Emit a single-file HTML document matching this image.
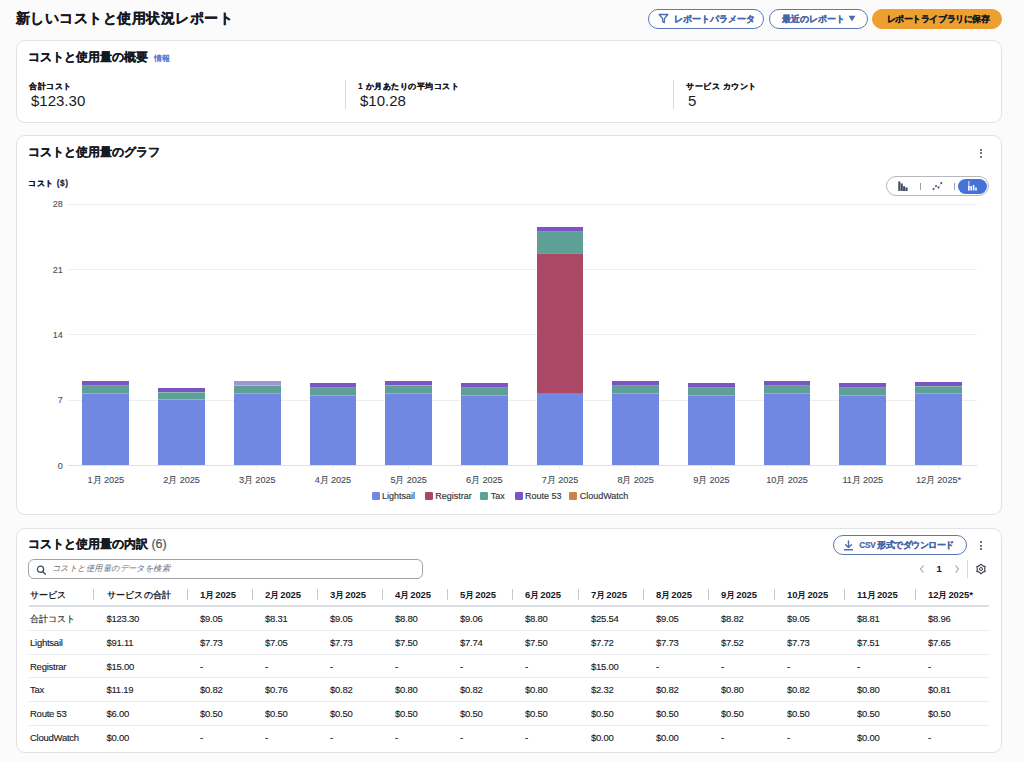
<!DOCTYPE html>
<html><head><meta charset="utf-8">
<style>
*{box-sizing:border-box;margin:0;padding:0}
html,body{width:1024px;height:762px;overflow:hidden;background:#fbfbfb;font-family:"Liberation Sans",sans-serif;color:#16191f}
.a{position:absolute;white-space:nowrap}
.card{position:absolute;left:16px;width:986px;background:#fff;border:1px solid #e1e2e4;border-radius:9px}
.btn{position:absolute;height:19.5px;border:1.8px solid #5b77b5;border-radius:10px;background:#fff}
.bt{position:absolute;font-size:8.6px;font-weight:bold;color:#4566a8;line-height:10px;white-space:nowrap;-webkit-text-stroke:0.2px currentColor}
.h2{font-size:12.2px;font-weight:bold;color:#16191f;line-height:14px;-webkit-text-stroke:0.2px #16191f}
.lbl{font-size:8.4px;letter-spacing:0.5px;font-weight:bold;color:#16191f;line-height:11px;-webkit-text-stroke:0.15px #16191f}
.val{font-size:15px;color:#16191f;line-height:17px}
.ylab{font-size:9px;color:#4a5059;text-align:right;width:20px;line-height:12px;-webkit-text-stroke:0.12px #4a5059}
.xl{font-size:9.2px;color:#454b54;text-align:center;width:70px;line-height:12px;letter-spacing:-0.1px;-webkit-text-stroke:0.1px #454b54}
.xl .j{font-size:8.8px}
.leg{font-size:9px;color:#2f3640;line-height:12px;-webkit-text-stroke:0.15px #2f3640}
.sw{position:absolute;width:8.2px;height:7.8px;border-radius:1.2px}
.th{font-size:9.5px;font-weight:bold;color:#16191f;line-height:12px;letter-spacing:-0.1px;word-spacing:-1.5px}
.th .j{font-size:8.5px;letter-spacing:0}
.td{font-size:9.5px;color:#16191f;line-height:12px;letter-spacing:-0.25px;-webkit-text-stroke:0.12px #16191f}
.td .j{font-size:8.5px;letter-spacing:0}
.sep{position:absolute;width:1px;height:11px;background:#c6c8ce;top:589px}
.rl{position:absolute;left:29px;width:960px;height:1px;background:#e9ebed}
.kb{position:absolute;width:2.4px;height:2.4px;border-radius:50%;background:#414d5c}
</style></head><body>
<div class="a" style="left:16px;top:8.8px;font-size:14px;letter-spacing:0.47px;font-weight:bold;line-height:18px;-webkit-text-stroke:0.25px #16191f">新しいコストと使用状況レポート</div>
<div class="btn" style="left:648px;top:9px;width:116px"></div>
<svg class="a" style="left:658px;top:13px" width="11" height="11" viewBox="0 0 11 11"><path d="M1.2 1.5 H9.8 L6.4 5.6 V9.6 L4.6 8.6 V5.6 Z" fill="none" stroke="#4b6db0" stroke-width="1.3" stroke-linejoin="round"/></svg>
<div class="bt" style="left:674px;top:14px">レポートパラメータ</div>
<div class="btn" style="left:769px;top:9px;width:99px"></div>
<div class="bt" style="left:782px;top:14px">最近のレポート</div>
<svg class="a" style="left:848px;top:15px" width="8" height="7" viewBox="0 0 8 7"><path d="M0.5 0.8 H7.5 L4 6.2 Z" fill="#4b6db0"/></svg>
<div class="btn" style="left:872px;top:9px;width:130px;background:#eda02f;border-color:#eda02f"></div>
<div class="bt" style="left:886.5px;top:14px;color:#16191f;letter-spacing:-0.42px">レポートライブラリに保存</div>
<div class="card" style="top:40px;height:83px"></div>
<div class="a h2" style="left:28px;top:50px">コストと使用量の概要</div>
<div class="a" style="left:153.5px;top:53.5px;font-size:8px;color:#4a6fd0;line-height:10px;-webkit-text-stroke:0.3px #4a6fd0">情報</div>
<div class="a lbl" style="left:29px;top:80.8px">合計コスト</div>
<div class="a val" style="left:31px;top:92px">$123.30</div>
<div class="a lbl" style="left:358px;top:80.8px">1 か月あたりの平均コスト</div>
<div class="a val" style="left:360px;top:92px">$10.28</div>
<div class="a lbl" style="left:686px;top:80.8px">サービス カウント</div>
<div class="a val" style="left:688px;top:92px">5</div>
<div style="position:absolute;left:345px;top:80px;width:1px;height:29px;background:#d9dbde"></div>
<div style="position:absolute;left:673px;top:80px;width:1px;height:29px;background:#d9dbde"></div>
<div class="card" style="top:135px;height:380px"></div>
<div class="a h2" style="left:28px;top:145px">コストと使用量のグラフ</div>
<div class="a lbl" style="left:28.4px;top:177.8px">コスト ($)</div>
<div class="kb" style="left:979.8px;top:148.5px"></div>
<div class="kb" style="left:979.8px;top:152px"></div>
<div class="kb" style="left:979.8px;top:155.5px"></div>
<div style="position:absolute;left:886px;top:176px;width:103px;height:19.5px;border:1px solid #b4b7bc;border-radius:10px"></div>
<div style="position:absolute;left:958px;top:179px;width:29px;height:14.5px;background:#4572d8;border-radius:8px"></div>
<div style="position:absolute;left:920px;top:183px;width:1px;height:7px;background:#9aa0a8"></div>
<div style="position:absolute;left:954px;top:183px;width:1px;height:7px;background:#9aa0a8"></div>
<svg class="a" style="left:897.5px;top:180.5px" width="11" height="11" viewBox="0 0 11 11"><g fill="#414d5c"><rect x="0.3" y="0.5" width="2.1" height="9.5"/><rect x="2.7" y="2.5" width="2.1" height="7.5"/><rect x="5.1" y="5.2" width="2.1" height="4.8"/><rect x="7.5" y="6.5" width="2.1" height="3.5"/></g></svg>
<svg class="a" style="left:932px;top:181px" width="11" height="10" viewBox="0 0 11 10"><g fill="#414d5c"><circle cx="1.5" cy="8" r="1"/><circle cx="4" cy="5" r="1"/><circle cx="6.5" cy="6.5" r="1"/><circle cx="9.3" cy="2" r="1"/></g><path d="M1.5 8 L4 5 L6.5 6.5 L9.3 2" stroke="#414d5c" stroke-width="0.4" opacity="0.5" fill="none"/></svg>
<svg class="a" style="left:967px;top:180px" width="12" height="12" viewBox="0 0 12 12"><g fill="#fff"><rect x="1" y="1" width="1.6" height="9.5" opacity="0.55"/><rect x="1" y="6" width="1.6" height="4.5"/><rect x="3.4" y="6" width="1.6" height="4.5"/><rect x="5.8" y="5" width="1.6" height="5.5"/><rect x="8.2" y="7.5" width="1.6" height="3"/></g></svg>
<div style="position:absolute;left:68.0px;top:203.70px;width:908.5px;height:1px;background:#eceef0"></div>
<div class="a ylab" style="left:42.7px;top:198.40px">28</div>
<div style="position:absolute;left:68.0px;top:268.98px;width:908.5px;height:1px;background:#eceef0"></div>
<div class="a ylab" style="left:42.7px;top:263.68px">21</div>
<div style="position:absolute;left:68.0px;top:334.25px;width:908.5px;height:1px;background:#eceef0"></div>
<div class="a ylab" style="left:42.7px;top:328.95px">14</div>
<div style="position:absolute;left:68.0px;top:399.52px;width:908.5px;height:1px;background:#eceef0"></div>
<div class="a ylab" style="left:42.7px;top:394.22px">7</div>
<div style="position:absolute;left:68.0px;top:464.80px;width:908.5px;height:1px;background:#dcdfe3"></div>
<div class="a ylab" style="left:42.7px;top:459.50px">0</div>
<div style="position:absolute;left:82.44px;top:393.22px;width:46.8px;height:72.08px;background:#7088e1"></div>
<div style="position:absolute;left:82.44px;top:385.57px;width:46.8px;height:7.65px;background:#5ea095"></div>
<div style="position:absolute;left:82.44px;top:392.62px;width:46.8px;height:1px;background:rgba(255,255,255,0.28)"></div>
<div style="position:absolute;left:82.44px;top:380.91px;width:46.8px;height:4.66px;background:#7b55c5"></div>
<div style="position:absolute;left:82.44px;top:384.97px;width:46.8px;height:1px;background:rgba(255,255,255,0.28)"></div>
<div style="position:absolute;left:105.34px;top:466.30px;width:1px;height:3px;background:#e6e8eb"></div>
<div class="a xl" style="left:70.84px;top:473.5px">1<span class="j">月</span> 2025</div>
<div style="position:absolute;left:158.13px;top:399.56px;width:46.8px;height:65.74px;background:#7088e1"></div>
<div style="position:absolute;left:158.13px;top:392.47px;width:46.8px;height:7.09px;background:#5ea095"></div>
<div style="position:absolute;left:158.13px;top:398.96px;width:46.8px;height:1px;background:rgba(255,255,255,0.28)"></div>
<div style="position:absolute;left:158.13px;top:387.81px;width:46.8px;height:4.66px;background:#7b55c5"></div>
<div style="position:absolute;left:158.13px;top:391.87px;width:46.8px;height:1px;background:rgba(255,255,255,0.28)"></div>
<div style="position:absolute;left:181.03px;top:466.30px;width:1px;height:3px;background:#e6e8eb"></div>
<div class="a xl" style="left:146.53px;top:473.5px">2<span class="j">月</span> 2025</div>
<div style="position:absolute;left:233.82px;top:393.22px;width:46.8px;height:72.08px;background:#7088e1"></div>
<div style="position:absolute;left:233.82px;top:385.57px;width:46.8px;height:7.65px;background:#5ea095"></div>
<div style="position:absolute;left:233.82px;top:392.62px;width:46.8px;height:1px;background:rgba(255,255,255,0.28)"></div>
<div style="position:absolute;left:233.82px;top:380.91px;width:46.8px;height:4.66px;background:#a592d6"></div>
<div style="position:absolute;left:233.82px;top:384.97px;width:46.8px;height:1px;background:rgba(255,255,255,0.28)"></div>
<div style="position:absolute;left:256.73px;top:466.30px;width:1px;height:3px;background:#e6e8eb"></div>
<div class="a xl" style="left:222.23px;top:473.5px">3<span class="j">月</span> 2025</div>
<div style="position:absolute;left:309.51px;top:395.36px;width:46.8px;height:69.94px;background:#7088e1"></div>
<div style="position:absolute;left:309.51px;top:387.90px;width:46.8px;height:7.46px;background:#5ea095"></div>
<div style="position:absolute;left:309.51px;top:394.76px;width:46.8px;height:1px;background:rgba(255,255,255,0.28)"></div>
<div style="position:absolute;left:309.51px;top:383.24px;width:46.8px;height:4.66px;background:#7b55c5"></div>
<div style="position:absolute;left:309.51px;top:387.30px;width:46.8px;height:1px;background:rgba(255,255,255,0.28)"></div>
<div style="position:absolute;left:332.41px;top:466.30px;width:1px;height:3px;background:#e6e8eb"></div>
<div class="a xl" style="left:297.91px;top:473.5px">4<span class="j">月</span> 2025</div>
<div style="position:absolute;left:385.20px;top:393.12px;width:46.8px;height:72.18px;background:#7088e1"></div>
<div style="position:absolute;left:385.20px;top:385.48px;width:46.8px;height:7.65px;background:#5ea095"></div>
<div style="position:absolute;left:385.20px;top:392.52px;width:46.8px;height:1px;background:rgba(255,255,255,0.28)"></div>
<div style="position:absolute;left:385.20px;top:380.82px;width:46.8px;height:4.66px;background:#7b55c5"></div>
<div style="position:absolute;left:385.20px;top:384.88px;width:46.8px;height:1px;background:rgba(255,255,255,0.28)"></div>
<div style="position:absolute;left:408.11px;top:466.30px;width:1px;height:3px;background:#e6e8eb"></div>
<div class="a xl" style="left:373.61px;top:473.5px">5<span class="j">月</span> 2025</div>
<div style="position:absolute;left:460.89px;top:395.36px;width:46.8px;height:69.94px;background:#7088e1"></div>
<div style="position:absolute;left:460.89px;top:387.90px;width:46.8px;height:7.46px;background:#5ea095"></div>
<div style="position:absolute;left:460.89px;top:394.76px;width:46.8px;height:1px;background:rgba(255,255,255,0.28)"></div>
<div style="position:absolute;left:460.89px;top:383.24px;width:46.8px;height:4.66px;background:#7b55c5"></div>
<div style="position:absolute;left:460.89px;top:387.30px;width:46.8px;height:1px;background:rgba(255,255,255,0.28)"></div>
<div style="position:absolute;left:483.79px;top:466.30px;width:1px;height:3px;background:#e6e8eb"></div>
<div class="a xl" style="left:449.29px;top:473.5px">6<span class="j">月</span> 2025</div>
<div style="position:absolute;left:536.59px;top:393.31px;width:46.8px;height:71.99px;background:#7088e1"></div>
<div style="position:absolute;left:536.59px;top:253.44px;width:46.8px;height:139.88px;background:#ab4866"></div>
<div style="position:absolute;left:536.59px;top:231.80px;width:46.8px;height:21.63px;background:#5ea095"></div>
<div style="position:absolute;left:536.59px;top:252.84px;width:46.8px;height:1px;background:rgba(255,255,255,0.28)"></div>
<div style="position:absolute;left:536.59px;top:227.14px;width:46.8px;height:4.66px;background:#7b55c5"></div>
<div style="position:absolute;left:536.59px;top:231.20px;width:46.8px;height:1px;background:rgba(255,255,255,0.28)"></div>
<div style="position:absolute;left:559.49px;top:466.30px;width:1px;height:3px;background:#e6e8eb"></div>
<div class="a xl" style="left:524.99px;top:473.5px">7<span class="j">月</span> 2025</div>
<div style="position:absolute;left:612.27px;top:393.22px;width:46.8px;height:72.08px;background:#7088e1"></div>
<div style="position:absolute;left:612.27px;top:385.57px;width:46.8px;height:7.65px;background:#5ea095"></div>
<div style="position:absolute;left:612.27px;top:392.62px;width:46.8px;height:1px;background:rgba(255,255,255,0.28)"></div>
<div style="position:absolute;left:612.27px;top:380.91px;width:46.8px;height:4.66px;background:#7b55c5"></div>
<div style="position:absolute;left:612.27px;top:384.97px;width:46.8px;height:1px;background:rgba(255,255,255,0.28)"></div>
<div style="position:absolute;left:635.17px;top:466.30px;width:1px;height:3px;background:#e6e8eb"></div>
<div class="a xl" style="left:600.67px;top:473.5px">8<span class="j">月</span> 2025</div>
<div style="position:absolute;left:687.97px;top:395.18px;width:46.8px;height:70.12px;background:#7088e1"></div>
<div style="position:absolute;left:687.97px;top:387.72px;width:46.8px;height:7.46px;background:#5ea095"></div>
<div style="position:absolute;left:687.97px;top:394.58px;width:46.8px;height:1px;background:rgba(255,255,255,0.28)"></div>
<div style="position:absolute;left:687.97px;top:383.05px;width:46.8px;height:4.66px;background:#7b55c5"></div>
<div style="position:absolute;left:687.97px;top:387.12px;width:46.8px;height:1px;background:rgba(255,255,255,0.28)"></div>
<div style="position:absolute;left:710.87px;top:466.30px;width:1px;height:3px;background:#e6e8eb"></div>
<div class="a xl" style="left:676.37px;top:473.5px">9<span class="j">月</span> 2025</div>
<div style="position:absolute;left:763.66px;top:393.22px;width:46.8px;height:72.08px;background:#7088e1"></div>
<div style="position:absolute;left:763.66px;top:385.57px;width:46.8px;height:7.65px;background:#5ea095"></div>
<div style="position:absolute;left:763.66px;top:392.62px;width:46.8px;height:1px;background:rgba(255,255,255,0.28)"></div>
<div style="position:absolute;left:763.66px;top:380.91px;width:46.8px;height:4.66px;background:#7b55c5"></div>
<div style="position:absolute;left:763.66px;top:384.97px;width:46.8px;height:1px;background:rgba(255,255,255,0.28)"></div>
<div style="position:absolute;left:786.56px;top:466.30px;width:1px;height:3px;background:#e6e8eb"></div>
<div class="a xl" style="left:752.06px;top:473.5px">10<span class="j">月</span> 2025</div>
<div style="position:absolute;left:839.35px;top:395.27px;width:46.8px;height:70.03px;background:#7088e1"></div>
<div style="position:absolute;left:839.35px;top:387.81px;width:46.8px;height:7.46px;background:#5ea095"></div>
<div style="position:absolute;left:839.35px;top:394.67px;width:46.8px;height:1px;background:rgba(255,255,255,0.28)"></div>
<div style="position:absolute;left:839.35px;top:383.15px;width:46.8px;height:4.66px;background:#7b55c5"></div>
<div style="position:absolute;left:839.35px;top:387.21px;width:46.8px;height:1px;background:rgba(255,255,255,0.28)"></div>
<div style="position:absolute;left:862.25px;top:466.30px;width:1px;height:3px;background:#e6e8eb"></div>
<div class="a xl" style="left:827.75px;top:473.5px">11<span class="j">月</span> 2025</div>
<div style="position:absolute;left:915.03px;top:393.96px;width:46.8px;height:71.34px;background:#7088e1"></div>
<div style="position:absolute;left:915.03px;top:386.41px;width:46.8px;height:7.55px;background:#5ea095"></div>
<div style="position:absolute;left:915.03px;top:393.36px;width:46.8px;height:1px;background:rgba(255,255,255,0.28)"></div>
<div style="position:absolute;left:915.03px;top:381.75px;width:46.8px;height:4.66px;background:#7b55c5"></div>
<div style="position:absolute;left:915.03px;top:385.81px;width:46.8px;height:1px;background:rgba(255,255,255,0.28)"></div>
<div style="position:absolute;left:937.93px;top:466.30px;width:1px;height:3px;background:#e6e8eb"></div>
<div class="a xl" style="left:903.43px;top:473.5px">12<span class="j">月</span> 2025*</div>
<div class="sw" style="left:371.5px;top:492px;background:#7088e1"></div>
<div class="a leg" style="left:382.0px;top:490px">Lightsail</div>
<div class="sw" style="left:424.8px;top:492px;background:#ab4866"></div>
<div class="a leg" style="left:435.3px;top:490px">Registrar</div>
<div class="sw" style="left:480.3px;top:492px;background:#5ea095"></div>
<div class="a leg" style="left:490.8px;top:490px">Tax</div>
<div class="sw" style="left:514.5px;top:492px;background:#7b55c5"></div>
<div class="a leg" style="left:525.0px;top:490px">Route 53</div>
<div class="sw" style="left:569.2px;top:492px;background:#c9834b"></div>
<div class="a leg" style="left:579.7px;top:490px">CloudWatch</div>
<div class="card" style="top:528px;height:225px"></div>
<div class="a h2" style="left:28px;top:537px">コストと使用量の内訳 <span style="font-weight:normal;color:#5f6b7a;font-size:12.5px">(6)</span></div>
<div class="btn" style="left:833px;top:535px;width:134px"></div>
<svg class="a" style="left:843px;top:540px" width="11" height="11" viewBox="0 0 11 11"><path d="M5.5 1 V7.5 M2.6 4.8 L5.5 7.6 L8.4 4.8 M1.5 9.8 H9.5" fill="none" stroke="#4b6db0" stroke-width="1.4" stroke-linecap="round" stroke-linejoin="round"/></svg>
<div class="bt" style="left:859.2px;top:540.5px;font-size:8.2px;letter-spacing:-0.2px">CSV</div>
<div class="bt" style="left:877px;top:540px;letter-spacing:-0.5px">形式でダウンロード</div>
<div class="kb" style="left:979.8px;top:541px"></div>
<div class="kb" style="left:979.8px;top:544.5px"></div>
<div class="kb" style="left:979.8px;top:548px"></div>
<div style="position:absolute;left:28px;top:559px;width:395px;height:19.5px;border:1px solid #a0a3a9;border-radius:6px"></div>
<svg class="a" style="left:35.5px;top:564.5px" width="11" height="11" viewBox="0 0 11 11"><circle cx="4.5" cy="4.3" r="3.1" fill="none" stroke="#414d5c" stroke-width="1.3"/><path d="M6.9 6.8 L9.3 9.2" stroke="#414d5c" stroke-width="1.4" stroke-linecap="round"/></svg>
<div class="a" style="left:52px;top:563px;font-size:8.3px;letter-spacing:0.45px;font-style:italic;color:#687078;line-height:11px">コストと使用量のデータを検索</div>
<svg class="a" style="left:917.5px;top:564px" width="8" height="10" viewBox="0 0 8 10"><path d="M5.5 1.5 L2.5 5 L5.5 8.5" fill="none" stroke="#9aa0a8" stroke-width="1.1"/></svg>
<div class="a" style="left:936.5px;top:563px;font-size:9.5px;font-weight:bold;color:#16191f;line-height:11px">1</div>
<svg class="a" style="left:953px;top:564px" width="8" height="10" viewBox="0 0 8 10"><path d="M2.5 1.5 L5.5 5 L2.5 8.5" fill="none" stroke="#9aa0a8" stroke-width="1.1"/></svg>
<div style="position:absolute;left:967px;top:560px;width:1px;height:18px;background:#d5d8dc"></div>
<svg class="a" style="left:975px;top:563.3px" width="12" height="12" viewBox="0 0 12 12"><path d="M6.00 1.20 L7.80 2.88 L10.16 3.60 L9.60 6.00 L10.16 8.40 L7.80 9.12 L6.00 10.80 L4.20 9.12 L1.84 8.40 L2.40 6.00 L1.84 3.60 L4.20 2.88 Z" fill="none" stroke="#3a414a" stroke-width="1.15" stroke-linejoin="round"/><circle cx="6" cy="6" r="1.5" fill="none" stroke="#3a414a" stroke-width="1"/></svg>
<div class="sep" style="left:93px"></div>
<div class="sep" style="left:187px"></div>
<div class="sep" style="left:252px"></div>
<div class="sep" style="left:317px"></div>
<div class="sep" style="left:382px"></div>
<div class="sep" style="left:447px"></div>
<div class="sep" style="left:512px"></div>
<div class="sep" style="left:578px"></div>
<div class="sep" style="left:643px"></div>
<div class="sep" style="left:708px"></div>
<div class="sep" style="left:774px"></div>
<div class="sep" style="left:844px"></div>
<div class="sep" style="left:915px"></div>
<div class="a th" style="left:30px;top:589px"><span class="j">サービス</span></div>
<div class="a th" style="left:106.5px;top:589px"><span class="j">サービス</span> <span class="j">の合計</span></div>
<div class="a th" style="left:200px;top:589px">1<span class="j">月</span> 2025</div>
<div class="a th" style="left:265px;top:589px">2<span class="j">月</span> 2025</div>
<div class="a th" style="left:330px;top:589px">3<span class="j">月</span> 2025</div>
<div class="a th" style="left:395px;top:589px">4<span class="j">月</span> 2025</div>
<div class="a th" style="left:460px;top:589px">5<span class="j">月</span> 2025</div>
<div class="a th" style="left:525px;top:589px">6<span class="j">月</span> 2025</div>
<div class="a th" style="left:591px;top:589px">7<span class="j">月</span> 2025</div>
<div class="a th" style="left:656px;top:589px">8<span class="j">月</span> 2025</div>
<div class="a th" style="left:721px;top:589px">9<span class="j">月</span> 2025</div>
<div class="a th" style="left:787px;top:589px">10<span class="j">月</span> 2025</div>
<div class="a th" style="left:857px;top:589px">11<span class="j">月</span> 2025</div>
<div class="a th" style="left:928px;top:589px">12<span class="j">月</span> 2025*</div>
<div style="position:absolute;left:29px;top:605px;width:960px;height:1.5px;background:#dcdfe3"></div>
<div class="a td" style="left:30px;top:613.00px"><span class="j">合計コスト</span></div>
<div class="a td" style="left:106.5px;top:613.00px">$123.30</div>
<div class="a td" style="left:200px;top:613.00px">$9.05</div>
<div class="a td" style="left:265px;top:613.00px">$8.31</div>
<div class="a td" style="left:330px;top:613.00px">$9.05</div>
<div class="a td" style="left:395px;top:613.00px">$8.80</div>
<div class="a td" style="left:460px;top:613.00px">$9.06</div>
<div class="a td" style="left:525px;top:613.00px">$8.80</div>
<div class="a td" style="left:591px;top:613.00px">$25.54</div>
<div class="a td" style="left:656px;top:613.00px">$9.05</div>
<div class="a td" style="left:721px;top:613.00px">$8.82</div>
<div class="a td" style="left:787px;top:613.00px">$9.05</div>
<div class="a td" style="left:857px;top:613.00px">$8.81</div>
<div class="a td" style="left:928px;top:613.00px">$8.96</div>
<div class="a td" style="left:30px;top:636.50px">Lightsail</div>
<div class="a td" style="left:106.5px;top:636.50px">$91.11</div>
<div class="a td" style="left:200px;top:636.50px">$7.73</div>
<div class="a td" style="left:265px;top:636.50px">$7.05</div>
<div class="a td" style="left:330px;top:636.50px">$7.73</div>
<div class="a td" style="left:395px;top:636.50px">$7.50</div>
<div class="a td" style="left:460px;top:636.50px">$7.74</div>
<div class="a td" style="left:525px;top:636.50px">$7.50</div>
<div class="a td" style="left:591px;top:636.50px">$7.72</div>
<div class="a td" style="left:656px;top:636.50px">$7.73</div>
<div class="a td" style="left:721px;top:636.50px">$7.52</div>
<div class="a td" style="left:787px;top:636.50px">$7.73</div>
<div class="a td" style="left:857px;top:636.50px">$7.51</div>
<div class="a td" style="left:928px;top:636.50px">$7.65</div>
<div class="a td" style="left:30px;top:660.50px">Registrar</div>
<div class="a td" style="left:106.5px;top:660.50px">$15.00</div>
<div class="a td" style="left:200px;top:660.50px">-</div>
<div class="a td" style="left:265px;top:660.50px">-</div>
<div class="a td" style="left:330px;top:660.50px">-</div>
<div class="a td" style="left:395px;top:660.50px">-</div>
<div class="a td" style="left:460px;top:660.50px">-</div>
<div class="a td" style="left:525px;top:660.50px">-</div>
<div class="a td" style="left:591px;top:660.50px">$15.00</div>
<div class="a td" style="left:656px;top:660.50px">-</div>
<div class="a td" style="left:721px;top:660.50px">-</div>
<div class="a td" style="left:787px;top:660.50px">-</div>
<div class="a td" style="left:857px;top:660.50px">-</div>
<div class="a td" style="left:928px;top:660.50px">-</div>
<div class="a td" style="left:30px;top:684.00px">Tax</div>
<div class="a td" style="left:106.5px;top:684.00px">$11.19</div>
<div class="a td" style="left:200px;top:684.00px">$0.82</div>
<div class="a td" style="left:265px;top:684.00px">$0.76</div>
<div class="a td" style="left:330px;top:684.00px">$0.82</div>
<div class="a td" style="left:395px;top:684.00px">$0.80</div>
<div class="a td" style="left:460px;top:684.00px">$0.82</div>
<div class="a td" style="left:525px;top:684.00px">$0.80</div>
<div class="a td" style="left:591px;top:684.00px">$2.32</div>
<div class="a td" style="left:656px;top:684.00px">$0.82</div>
<div class="a td" style="left:721px;top:684.00px">$0.80</div>
<div class="a td" style="left:787px;top:684.00px">$0.82</div>
<div class="a td" style="left:857px;top:684.00px">$0.80</div>
<div class="a td" style="left:928px;top:684.00px">$0.81</div>
<div class="a td" style="left:30px;top:708.00px">Route 53</div>
<div class="a td" style="left:106.5px;top:708.00px">$6.00</div>
<div class="a td" style="left:200px;top:708.00px">$0.50</div>
<div class="a td" style="left:265px;top:708.00px">$0.50</div>
<div class="a td" style="left:330px;top:708.00px">$0.50</div>
<div class="a td" style="left:395px;top:708.00px">$0.50</div>
<div class="a td" style="left:460px;top:708.00px">$0.50</div>
<div class="a td" style="left:525px;top:708.00px">$0.50</div>
<div class="a td" style="left:591px;top:708.00px">$0.50</div>
<div class="a td" style="left:656px;top:708.00px">$0.50</div>
<div class="a td" style="left:721px;top:708.00px">$0.50</div>
<div class="a td" style="left:787px;top:708.00px">$0.50</div>
<div class="a td" style="left:857px;top:708.00px">$0.50</div>
<div class="a td" style="left:928px;top:708.00px">$0.50</div>
<div class="a td" style="left:30px;top:731.50px">CloudWatch</div>
<div class="a td" style="left:106.5px;top:731.50px">$0.00</div>
<div class="a td" style="left:200px;top:731.50px">-</div>
<div class="a td" style="left:265px;top:731.50px">-</div>
<div class="a td" style="left:330px;top:731.50px">-</div>
<div class="a td" style="left:395px;top:731.50px">-</div>
<div class="a td" style="left:460px;top:731.50px">-</div>
<div class="a td" style="left:525px;top:731.50px">-</div>
<div class="a td" style="left:591px;top:731.50px">$0.00</div>
<div class="a td" style="left:656px;top:731.50px">$0.00</div>
<div class="a td" style="left:721px;top:731.50px">-</div>
<div class="a td" style="left:787px;top:731.50px">-</div>
<div class="a td" style="left:857px;top:731.50px">$0.00</div>
<div class="a td" style="left:928px;top:731.50px">-</div>
<div class="rl" style="top:630.00px"></div>
<div class="rl" style="top:653.50px"></div>
<div class="rl" style="top:677.20px"></div>
<div class="rl" style="top:701.00px"></div>
<div class="rl" style="top:724.90px"></div>
</body></html>
